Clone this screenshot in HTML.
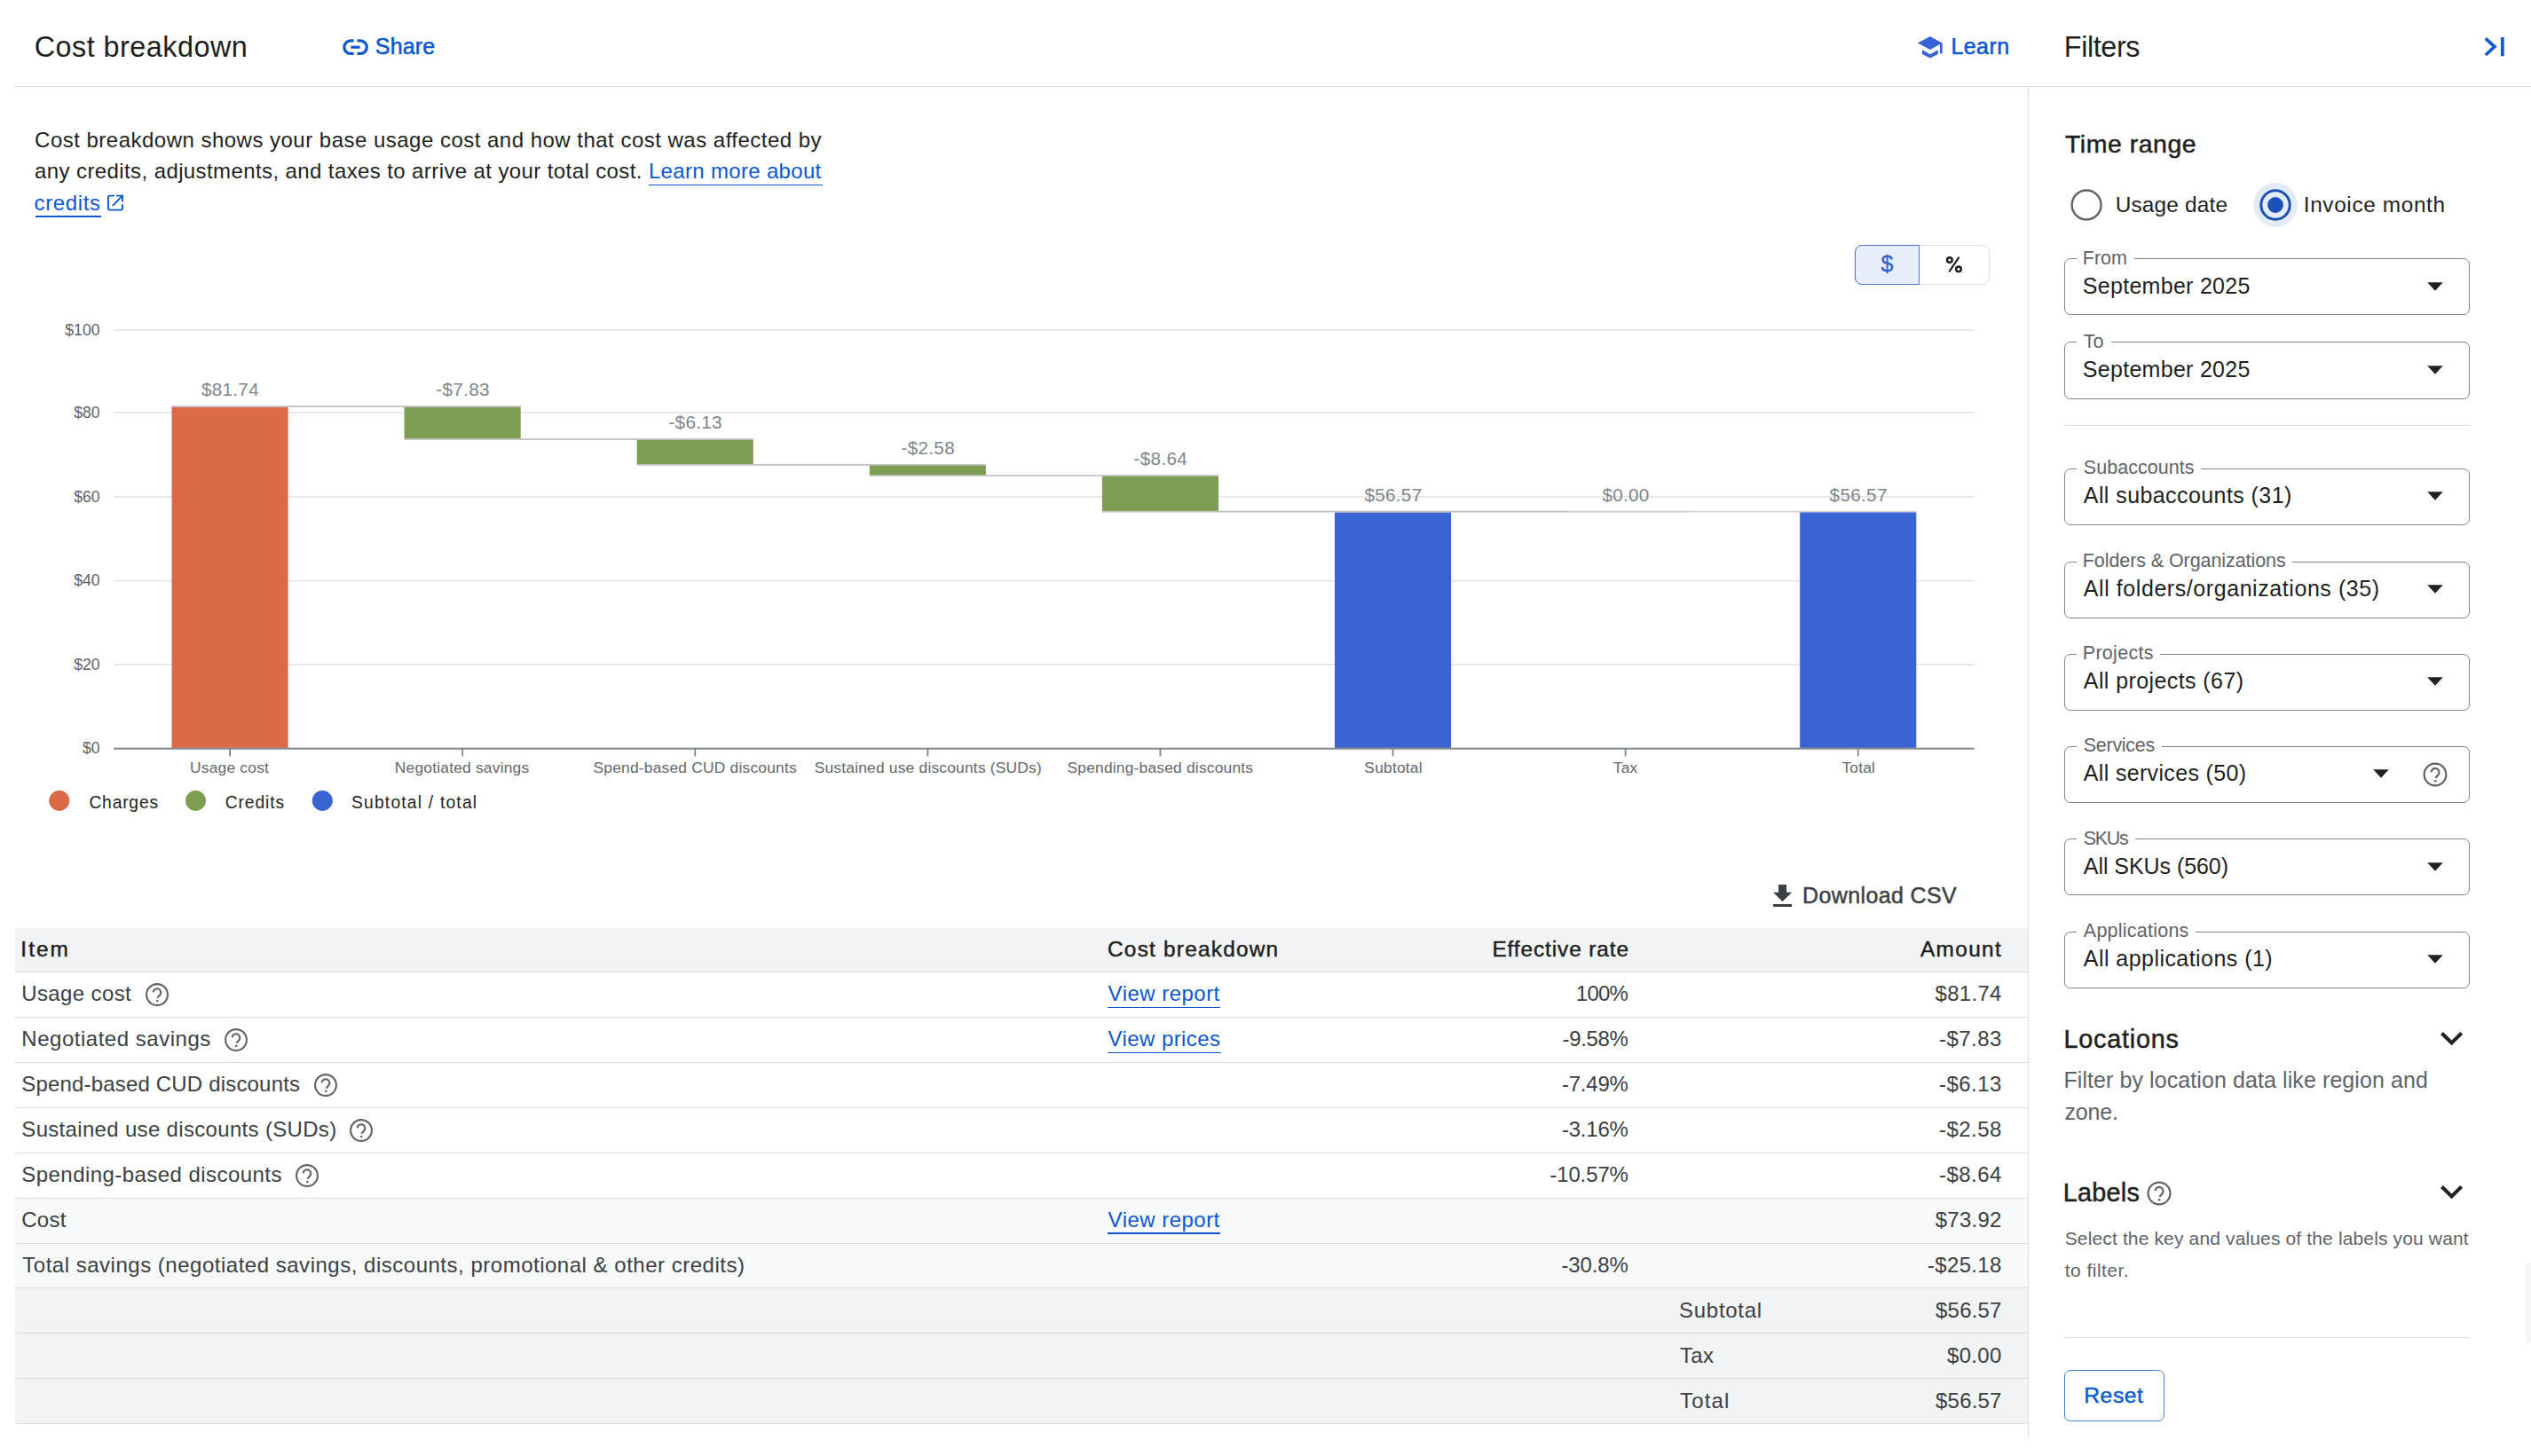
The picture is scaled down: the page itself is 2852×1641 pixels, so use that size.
<!DOCTYPE html>
<html lang="en"><head><meta charset="utf-8"><title>Cost breakdown</title>
<style>
html,body{margin:0;padding:0;background:#ffffff;}
body{width:2852px;height:1641px;position:relative;overflow:hidden;font-family:"Liberation Sans", sans-serif;}
.t{position:absolute;white-space:pre;line-height:0;font-family:"Liberation Sans", sans-serif;}
@media (max-width:1600px){html{zoom:0.5;}}
</style></head><body>
<div style="position:absolute;left:17.00px;top:96.60px;width:2835.00px;height:1.40px;background:#dadce0;"></div>
<div style="position:absolute;left:2284.60px;top:97.50px;width:1.20px;height:1520.00px;background:#dadce0;"></div>
<div style="position:absolute;left:2846.00px;top:1423.00px;width:6.00px;height:91.00px;background:#f6f6f6;"></div>
<svg style="position:absolute;left:0;top:0" width="2852" height="100" viewBox="0 0 2852 100">
<g fill="none" stroke="#0b57d0" stroke-width="3.2">
<path d="M398.6 45.9 H395.1 A7.25 7.25 0 0 0 395.1 60.4 H398.6"/>
<path d="M402.6 45.9 H406.1 A7.25 7.25 0 0 1 406.1 60.4 H402.6"/>
<path d="M395.4 53.2 H405.6"/>
</g>
<g fill="#3562d4">
<path d="M2174.9 41.1 L2160.9 48.6 L2174.9 56.0 L2188.5 48.6 Z"/>
<path d="M2166.0 56.3 L2166.0 61.0 L2174.9 65.6 L2183.8 61.0 L2183.8 56.3 L2174.9 61.2 Z"/>
<rect x="2186.0" y="48.6" width="2.6" height="11.8"/>
</g>
<g fill="none" stroke="#0b5cd6" stroke-width="3.6">
<path d="M2800.8 43.3 L2811.0 52.6 L2800.8 62.0"/>
</g>
<rect x="2818.0" y="42.0" width="3.7" height="21.3" fill="#0b5cd6"/>
</svg>
<div style="position:absolute;left:730.70px;top:207.60px;width:196.00px;height:1.40px;background:#0b57d0;"></div>
<div style="position:absolute;left:39.50px;top:243.20px;width:74.00px;height:1.40px;background:#0b57d0;"></div>
<svg style="position:absolute;left:110px;top:210px" width="40" height="35" viewBox="110 210 40 35"><g fill="none" stroke="#0b57d0" stroke-width="1.9" stroke-linecap="square">
<path d="M128.0 220.6 H124.0 Q121.9 220.6 121.9 222.7 V234.5 Q121.9 236.6 124.0 236.6 H135.9 Q138.0 236.6 138.0 234.5 V231.2"/>
<path d="M132.0 220.6 H138.0 V226.4"/>
<path d="M127.4 231.3 L137.4 221.2" stroke-linecap="round"/>
</g></svg>
<div style="position:absolute;left:2090.30px;top:276.10px;width:151.60px;height:44.60px;background:#fff;box-sizing:border-box;border:1.3px solid #dadce0;border-radius:8px;"></div>
<div style="position:absolute;left:2090.30px;top:276.10px;width:72.60px;height:44.60px;background:#e8eef9;box-sizing:border-box;border:1.5px solid #4d73d3;border-radius:8px 0 0 8px;"></div>
<svg style="position:absolute;left:2185px;top:284px" width="32" height="28" viewBox="2185 284 32 28"><g fill="none" stroke="#1f1f1f"><circle cx="2196.9" cy="293.0" r="2.85" stroke-width="2.5"/><circle cx="2207.0" cy="303.3" r="2.85" stroke-width="2.5"/><path d="M2207.6 289.6 L2196.3 306.3" stroke-width="2.1"/></g></svg>
<svg style="position:absolute;left:0;top:0" width="2852" height="960" viewBox="0 0 2852 960">
<rect x="128.0" y="748.30" width="2096.8" height="1.6" fill="#e1e3e6"/>
<rect x="128.0" y="653.80" width="2096.8" height="1.6" fill="#e1e3e6"/>
<rect x="128.0" y="559.10" width="2096.8" height="1.6" fill="#e1e3e6"/>
<rect x="128.0" y="464.20" width="2096.8" height="1.6" fill="#e1e3e6"/>
<rect x="128.0" y="371.40" width="2096.8" height="1.6" fill="#e1e3e6"/>
<rect x="193.50" y="458.15" width="131.1" height="384.75" fill="#db6a46"/>
<rect x="455.60" y="458.15" width="131.1" height="36.86" fill="#7c9d52"/>
<rect x="717.70" y="495.01" width="131.1" height="28.85" fill="#7c9d52"/>
<rect x="979.80" y="523.86" width="131.1" height="12.14" fill="#7c9d52"/>
<rect x="1241.90" y="536.00" width="131.1" height="40.67" fill="#7c9d52"/>
<rect x="1504.00" y="576.63" width="131.1" height="266.27" fill="#3a64d2"/>
<rect x="2028.20" y="576.63" width="131.1" height="266.27" fill="#3a64d2"/>
<rect x="193.50" y="457.25" width="393.20" height="1.8" fill="#c2c2c2"/>
<rect x="455.60" y="494.11" width="393.20" height="1.8" fill="#c2c2c2"/>
<rect x="717.70" y="522.96" width="393.20" height="1.8" fill="#c2c2c2"/>
<rect x="979.80" y="535.10" width="393.20" height="1.8" fill="#c2c2c2"/>
<rect x="1241.90" y="575.73" width="393.20" height="1.8" fill="#c2c2c2"/>
<rect x="1504.00" y="575.73" width="393.20" height="1.8" fill="#c2c2c2"/>
<rect x="1766.10" y="575.73" width="393.20" height="1.8" fill="#d4d4d4"/>
<rect x="128.0" y="842.70" width="2096.8" height="2.0" fill="#80868b"/>
<rect x="258.15" y="842.9" width="1.8" height="9.5" fill="#80868b"/>
<rect x="520.25" y="842.9" width="1.8" height="9.5" fill="#80868b"/>
<rect x="782.35" y="842.9" width="1.8" height="9.5" fill="#80868b"/>
<rect x="1044.45" y="842.9" width="1.8" height="9.5" fill="#80868b"/>
<rect x="1306.55" y="842.9" width="1.8" height="9.5" fill="#80868b"/>
<rect x="1568.65" y="842.9" width="1.8" height="9.5" fill="#80868b"/>
<rect x="1830.75" y="842.9" width="1.8" height="9.5" fill="#80868b"/>
<rect x="2092.85" y="842.9" width="1.8" height="9.5" fill="#80868b"/>
<circle cx="66.8" cy="902.4" r="11.1" fill="#db6a46" stroke="#d05a30" stroke-width="0.8"/>
<circle cx="220.5" cy="902.4" r="11.1" fill="#7c9d52" stroke="#6f9a3a" stroke-width="0.8"/>
<circle cx="363.3" cy="902.4" r="11.1" fill="#3a64d2" stroke="#2a55d0" stroke-width="0.8"/>
</svg>
<svg style="position:absolute;left:1997.7px;top:997.1px" width="21.2" height="24.9" viewBox="5 3 14 17" preserveAspectRatio="none"><path fill="#3c4043" d="M19 9h-4V3H9v6H5l7 7 7-7zM5 18v2h14v-2H5z"/></svg>
<div style="position:absolute;left:17.00px;top:1045.50px;width:2267.60px;height:50.00px;background:#f1f3f4;"></div>
<div style="position:absolute;left:17.00px;top:1095.50px;width:2267.60px;height:50.92px;background:#ffffff;"></div>
<div style="position:absolute;left:17.00px;top:1146.42px;width:2267.60px;height:50.92px;background:#ffffff;"></div>
<div style="position:absolute;left:17.00px;top:1197.34px;width:2267.60px;height:50.92px;background:#ffffff;"></div>
<div style="position:absolute;left:17.00px;top:1248.26px;width:2267.60px;height:50.92px;background:#ffffff;"></div>
<div style="position:absolute;left:17.00px;top:1299.18px;width:2267.60px;height:50.92px;background:#ffffff;"></div>
<div style="position:absolute;left:17.00px;top:1350.10px;width:2267.60px;height:50.92px;background:#f8f9fa;"></div>
<div style="position:absolute;left:17.00px;top:1401.02px;width:2267.60px;height:50.92px;background:#f8f9fa;"></div>
<div style="position:absolute;left:17.00px;top:1451.94px;width:2267.60px;height:50.92px;background:#f1f3f4;"></div>
<div style="position:absolute;left:17.00px;top:1502.86px;width:2267.60px;height:50.92px;background:#f1f3f4;"></div>
<div style="position:absolute;left:17.00px;top:1553.78px;width:2267.60px;height:50.92px;background:#f1f3f4;"></div>
<div style="position:absolute;left:17.00px;top:1095.00px;width:2267.60px;height:1.00px;background:#dadce0;"></div>
<div style="position:absolute;left:17.00px;top:1146.00px;width:2267.60px;height:1.00px;background:#dadce0;"></div>
<div style="position:absolute;left:17.00px;top:1197.00px;width:2267.60px;height:1.00px;background:#dadce0;"></div>
<div style="position:absolute;left:17.00px;top:1248.00px;width:2267.60px;height:1.00px;background:#dadce0;"></div>
<div style="position:absolute;left:17.00px;top:1299.00px;width:2267.60px;height:1.00px;background:#dadce0;"></div>
<div style="position:absolute;left:17.00px;top:1350.00px;width:2267.60px;height:1.00px;background:#dadce0;"></div>
<div style="position:absolute;left:17.00px;top:1401.00px;width:2267.60px;height:1.00px;background:#dadce0;"></div>
<div style="position:absolute;left:17.00px;top:1451.00px;width:2267.60px;height:1.00px;background:#dadce0;"></div>
<div style="position:absolute;left:17.00px;top:1502.00px;width:2267.60px;height:1.00px;background:#dadce0;"></div>
<div style="position:absolute;left:17.00px;top:1553.00px;width:2267.60px;height:1.00px;background:#dadce0;"></div>
<div style="position:absolute;left:17.00px;top:1604.00px;width:2267.60px;height:1.00px;background:#dadce0;"></div>
<div style="position:absolute;left:1248.30px;top:1134.70px;width:126.90px;height:1.40px;background:#0b57d0;z-index:2"></div>
<div style="position:absolute;left:1248.30px;top:1185.62px;width:127.30px;height:1.40px;background:#0b57d0;z-index:2"></div>
<div style="position:absolute;left:1248.30px;top:1389.30px;width:126.90px;height:1.40px;background:#0b57d0;z-index:2"></div>
<svg style="position:absolute;left:2300px;top:190px" width="320" height="80" viewBox="2300 190 320 80">
<circle cx="2351.1" cy="231" r="16.45" fill="none" stroke="#5f6368" stroke-width="2.4"/>
<circle cx="2564" cy="231" r="24.9" fill="#e4ebf8"/>
<circle cx="2564" cy="231" r="16.2" fill="none" stroke="#1b51b5" stroke-width="3.0"/>
<circle cx="2564" cy="231" r="8.9" fill="#1b51b5"/>
</svg>
<div style="position:absolute;left:2326.30px;top:291.30px;width:457.20px;height:64.20px;background:transparent;box-sizing:border-box;border:1.3px solid #80868b;border-radius:7px;"></div>
<div style="position:absolute;left:2340.00px;top:288.30px;width:64.60px;height:6.00px;background:#ffffff;"></div>
<svg style="position:absolute;left:2734.60px;top:317.60px" width="18" height="10" viewBox="0 0 18 10"><path d="M0.2 0.2 H17.8 L9 9.8 Z" fill="#202124"/></svg>
<div style="position:absolute;left:2326.30px;top:385.40px;width:457.20px;height:64.20px;background:transparent;box-sizing:border-box;border:1.3px solid #80868b;border-radius:7px;"></div>
<div style="position:absolute;left:2340.00px;top:382.40px;width:39.00px;height:6.00px;background:#ffffff;"></div>
<svg style="position:absolute;left:2734.60px;top:411.70px" width="18" height="10" viewBox="0 0 18 10"><path d="M0.2 0.2 H17.8 L9 9.8 Z" fill="#202124"/></svg>
<div style="position:absolute;left:2326.00px;top:478.60px;width:458.00px;height:1.30px;background:#dadce0;"></div>
<div style="position:absolute;left:2326.30px;top:527.50px;width:457.20px;height:64.20px;background:transparent;box-sizing:border-box;border:1.3px solid #80868b;border-radius:7px;"></div>
<div style="position:absolute;left:2340.00px;top:524.50px;width:140.20px;height:6.00px;background:#ffffff;"></div>
<svg style="position:absolute;left:2734.60px;top:553.80px" width="18" height="10" viewBox="0 0 18 10"><path d="M0.2 0.2 H17.8 L9 9.8 Z" fill="#202124"/></svg>
<div style="position:absolute;left:2326.30px;top:632.60px;width:457.20px;height:64.20px;background:transparent;box-sizing:border-box;border:1.3px solid #80868b;border-radius:7px;"></div>
<div style="position:absolute;left:2340.00px;top:629.60px;width:243.40px;height:6.00px;background:#ffffff;"></div>
<svg style="position:absolute;left:2734.60px;top:658.90px" width="18" height="10" viewBox="0 0 18 10"><path d="M0.2 0.2 H17.8 L9 9.8 Z" fill="#202124"/></svg>
<div style="position:absolute;left:2326.30px;top:736.70px;width:457.20px;height:64.20px;background:transparent;box-sizing:border-box;border:1.3px solid #80868b;border-radius:7px;"></div>
<div style="position:absolute;left:2340.00px;top:733.70px;width:94.20px;height:6.00px;background:#ffffff;"></div>
<svg style="position:absolute;left:2734.60px;top:763.00px" width="18" height="10" viewBox="0 0 18 10"><path d="M0.2 0.2 H17.8 L9 9.8 Z" fill="#202124"/></svg>
<div style="position:absolute;left:2326.30px;top:840.50px;width:457.20px;height:64.20px;background:transparent;box-sizing:border-box;border:1.3px solid #80868b;border-radius:7px;"></div>
<div style="position:absolute;left:2340.00px;top:837.50px;width:96.00px;height:6.00px;background:#ffffff;"></div>
<svg style="position:absolute;left:2673.80px;top:866.80px" width="18" height="10" viewBox="0 0 18 10"><path d="M0.2 0.2 H17.8 L9 9.8 Z" fill="#202124"/></svg>
<div style="position:absolute;left:2326.30px;top:945.30px;width:457.20px;height:64.20px;background:transparent;box-sizing:border-box;border:1.3px solid #80868b;border-radius:7px;"></div>
<div style="position:absolute;left:2340.00px;top:942.30px;width:66.40px;height:6.00px;background:#ffffff;"></div>
<svg style="position:absolute;left:2734.60px;top:971.60px" width="18" height="10" viewBox="0 0 18 10"><path d="M0.2 0.2 H17.8 L9 9.8 Z" fill="#202124"/></svg>
<div style="position:absolute;left:2326.30px;top:1049.90px;width:457.20px;height:64.20px;background:transparent;box-sizing:border-box;border:1.3px solid #80868b;border-radius:7px;"></div>
<div style="position:absolute;left:2340.00px;top:1046.90px;width:134.10px;height:6.00px;background:#ffffff;"></div>
<svg style="position:absolute;left:2734.60px;top:1076.20px" width="18" height="10" viewBox="0 0 18 10"><path d="M0.2 0.2 H17.8 L9 9.8 Z" fill="#202124"/></svg>
<svg style="position:absolute;left:2749.5px;top:1163.30px" width="25.2" height="15.3" viewBox="6 8.59 12 7.41" preserveAspectRatio="none"><path fill="#202124" d="M16.59 8.59 12 13.17 7.41 8.59 6 10l6 6 6-6z"/></svg>
<svg style="position:absolute;left:2749.5px;top:1336.30px" width="25.2" height="15.3" viewBox="6 8.59 12 7.41" preserveAspectRatio="none"><path fill="#202124" d="M16.59 8.59 12 13.17 7.41 8.59 6 10l6 6 6-6z"/></svg>
<div style="position:absolute;left:2326.00px;top:1506.50px;width:458.00px;height:1.30px;background:#dadce0;"></div>
<div style="position:absolute;left:2326.20px;top:1544.30px;width:112.70px;height:57.30px;background:transparent;box-sizing:border-box;border:1.3px solid #4a7fd6;border-radius:7px;"></div>
<div class="t" style="left:38.70px;top:53.10px;font-size:32.4px;letter-spacing:0.466px;color:#1f1f1f;">Cost breakdown</div>
<div class="t" style="left:422.80px;top:51.80px;font-size:25px;letter-spacing:0.173px;color:#0b57d0;-webkit-text-stroke:0.55px #0b57d0;">Share</div>
<div class="t" style="left:2198.40px;top:51.90px;font-size:25px;letter-spacing:0.441px;color:#0b57d0;-webkit-text-stroke:0.55px #0b57d0;">Learn</div>
<div class="t" style="left:2325.80px;top:53.10px;font-size:32.4px;letter-spacing:-0.413px;color:#1f1f1f;">Filters</div>
<div class="t" style="left:39.10px;top:157.60px;font-size:24px;letter-spacing:0.484px;color:#1f1f1f;">Cost breakdown shows your base usage cost and how that cost was affected by</div>
<div class="t" style="left:39.10px;top:193.10px;font-size:24px;letter-spacing:0.397px;color:#1f1f1f;">any credits, adjustments, and taxes to arrive at your total cost.</div>
<div class="t" style="left:730.90px;top:193.10px;font-size:24px;letter-spacing:0.327px;color:#0b57d0;">Learn more about</div>
<div class="t" style="left:38.50px;top:228.70px;font-size:24px;letter-spacing:0.635px;color:#0b57d0;">credits</div>
<div class="t" style="left:2119.50px;top:296.80px;font-size:25px;letter-spacing:0.000px;color:#2f5fcf;-webkit-text-stroke:0.35px #2f5fcf;">$</div>
<div class="t" style="left:92.96px;top:842.70px;font-size:17.7px;letter-spacing:0.000px;color:#5f6368;">$0</div>
<div class="t" style="left:83.13px;top:748.90px;font-size:17.7px;letter-spacing:0.000px;color:#5f6368;">$20</div>
<div class="t" style="left:83.13px;top:654.40px;font-size:17.7px;letter-spacing:0.000px;color:#5f6368;">$40</div>
<div class="t" style="left:83.13px;top:559.70px;font-size:17.7px;letter-spacing:0.000px;color:#5f6368;">$60</div>
<div class="t" style="left:83.13px;top:464.80px;font-size:17.7px;letter-spacing:0.000px;color:#5f6368;">$80</div>
<div class="t" style="left:73.29px;top:372.00px;font-size:17.7px;letter-spacing:0.000px;color:#5f6368;">$100</div>
<div class="t" style="left:214.07px;top:865.10px;font-size:17.4px;letter-spacing:0.200px;color:#64686c;">Usage cost</div>
<div class="t" style="left:444.84px;top:865.10px;font-size:17.4px;letter-spacing:0.200px;color:#64686c;">Negotiated savings</div>
<div class="t" style="left:668.56px;top:865.10px;font-size:17.4px;letter-spacing:0.200px;color:#64686c;">Spend-based CUD discounts</div>
<div class="t" style="left:917.67px;top:865.10px;font-size:17.4px;letter-spacing:0.200px;color:#64686c;">Sustained use discounts (SUDs)</div>
<div class="t" style="left:1202.51px;top:865.10px;font-size:17.4px;letter-spacing:0.200px;color:#64686c;">Spending-based discounts</div>
<div class="t" style="left:1537.37px;top:865.10px;font-size:17.4px;letter-spacing:0.200px;color:#64686c;">Subtotal</div>
<div class="t" style="left:1817.77px;top:865.10px;font-size:17.4px;letter-spacing:0.200px;color:#64686c;">Tax</div>
<div class="t" style="left:2075.42px;top:865.10px;font-size:17.4px;letter-spacing:0.200px;color:#64686c;">Total</div>
<div class="t" style="left:226.92px;top:439.35px;font-size:20.7px;letter-spacing:0.300px;color:#80868b;">$81.74</div>
<div class="t" style="left:491.32px;top:439.35px;font-size:20.7px;letter-spacing:0.300px;color:#80868b;">-$7.83</div>
<div class="t" style="left:753.42px;top:476.21px;font-size:20.7px;letter-spacing:0.300px;color:#80868b;">-$6.13</div>
<div class="t" style="left:1015.52px;top:505.06px;font-size:20.7px;letter-spacing:0.300px;color:#80868b;">-$2.58</div>
<div class="t" style="left:1277.62px;top:517.20px;font-size:20.7px;letter-spacing:0.300px;color:#80868b;">-$8.64</div>
<div class="t" style="left:1537.42px;top:557.83px;font-size:20.7px;letter-spacing:0.300px;color:#80868b;">$56.57</div>
<div class="t" style="left:1805.42px;top:557.83px;font-size:20.7px;letter-spacing:0.300px;color:#80868b;">$0.00</div>
<div class="t" style="left:2061.62px;top:557.83px;font-size:20.7px;letter-spacing:0.300px;color:#80868b;">$56.57</div>
<div class="t" style="left:100.40px;top:905.00px;font-size:19.3px;letter-spacing:0.794px;color:#1f1f1f;">Charges</div>
<div class="t" style="left:253.70px;top:905.00px;font-size:19.3px;letter-spacing:0.911px;color:#1f1f1f;">Credits</div>
<div class="t" style="left:396.00px;top:905.00px;font-size:19.3px;letter-spacing:1.188px;color:#1f1f1f;">Subtotal / total</div>
<div class="t" style="left:2031.10px;top:1008.60px;font-size:25px;letter-spacing:0.368px;color:#3c4043;-webkit-text-stroke:0.45px #3c4043;">Download CSV</div>
<div class="t" style="left:23.30px;top:1069.90px;font-size:24.4px;letter-spacing:2.061px;color:#1f1f1f;-webkit-text-stroke:0.45px #1f1f1f;">Item</div>
<div class="t" style="left:1248.00px;top:1069.90px;font-size:24.4px;letter-spacing:1.224px;color:#1f1f1f;-webkit-text-stroke:0.45px #1f1f1f;">Cost breakdown</div>
<div class="t" style="left:1681.40px;top:1069.90px;font-size:24.4px;letter-spacing:0.905px;color:#1f1f1f;-webkit-text-stroke:0.45px #1f1f1f;">Effective rate</div>
<div class="t" style="left:2164.00px;top:1069.90px;font-size:24.4px;letter-spacing:1.344px;color:#1f1f1f;-webkit-text-stroke:0.45px #1f1f1f;">Amount</div>
<div class="t" style="left:24.30px;top:1120.20px;font-size:24px;letter-spacing:0.368px;color:#3c4043;">Usage cost</div>
<div class="t" style="left:1248.60px;top:1120.20px;font-size:24px;letter-spacing:0.472px;color:#0b57d0;">View report</div>
<div class="t" style="left:1775.80px;top:1120.20px;font-size:24px;letter-spacing:-0.748px;color:#3c4043;">100%</div>
<div class="t" style="left:2180.60px;top:1120.20px;font-size:24px;letter-spacing:0.268px;color:#3c4043;">$81.74</div>
<div class="t" style="left:24.30px;top:1171.22px;font-size:24px;letter-spacing:0.522px;color:#3c4043;">Negotiated savings</div>
<div class="t" style="left:1248.60px;top:1171.22px;font-size:24px;letter-spacing:0.413px;color:#0b57d0;">View prices</div>
<div class="t" style="left:1760.60px;top:1171.22px;font-size:24px;letter-spacing:-0.341px;color:#3c4043;">-9.58%</div>
<div class="t" style="left:2185.00px;top:1171.22px;font-size:24px;letter-spacing:0.459px;color:#3c4043;">-$7.83</div>
<div class="t" style="left:24.30px;top:1222.24px;font-size:24px;letter-spacing:0.175px;color:#3c4043;">Spend-based CUD discounts</div>
<div class="t" style="left:1759.90px;top:1222.24px;font-size:24px;letter-spacing:-0.201px;color:#3c4043;">-7.49%</div>
<div class="t" style="left:2185.00px;top:1222.24px;font-size:24px;letter-spacing:0.459px;color:#3c4043;">-$6.13</div>
<div class="t" style="left:24.30px;top:1273.26px;font-size:24px;letter-spacing:0.324px;color:#3c4043;">Sustained use discounts (SUDs)</div>
<div class="t" style="left:1759.90px;top:1273.26px;font-size:24px;letter-spacing:-0.201px;color:#3c4043;">-3.16%</div>
<div class="t" style="left:2185.00px;top:1273.26px;font-size:24px;letter-spacing:0.459px;color:#3c4043;">-$2.58</div>
<div class="t" style="left:24.30px;top:1324.28px;font-size:24px;letter-spacing:0.445px;color:#3c4043;">Spending-based discounts</div>
<div class="t" style="left:1746.30px;top:1324.28px;font-size:24px;letter-spacing:-0.125px;color:#3c4043;">-10.57%</div>
<div class="t" style="left:2185.00px;top:1324.28px;font-size:24px;letter-spacing:0.459px;color:#3c4043;">-$8.64</div>
<div class="t" style="left:24.30px;top:1375.30px;font-size:24px;letter-spacing:0.240px;color:#3c4043;">Cost</div>
<div class="t" style="left:1248.60px;top:1375.30px;font-size:24px;letter-spacing:0.472px;color:#0b57d0;">View report</div>
<div class="t" style="left:2180.80px;top:1375.30px;font-size:24px;letter-spacing:0.228px;color:#3c4043;">$73.92</div>
<div class="t" style="left:25.30px;top:1426.32px;font-size:24px;letter-spacing:0.511px;color:#3c4043;">Total savings (negotiated savings, discounts, promotional &amp; other credits)</div>
<div class="t" style="left:1759.40px;top:1426.32px;font-size:24px;letter-spacing:-0.101px;color:#3c4043;">-30.8%</div>
<div class="t" style="left:2172.00px;top:1426.32px;font-size:24px;letter-spacing:0.325px;color:#3c4043;">-$25.18</div>
<div class="t" style="left:1892.10px;top:1477.34px;font-size:24px;letter-spacing:0.695px;color:#3c4043;">Subtotal</div>
<div class="t" style="left:2181.10px;top:1477.34px;font-size:24px;letter-spacing:0.168px;color:#3c4043;">$56.57</div>
<div class="t" style="left:1893.10px;top:1528.36px;font-size:24px;letter-spacing:0.276px;color:#3c4043;">Tax</div>
<div class="t" style="left:2194.00px;top:1528.36px;font-size:24px;letter-spacing:0.322px;color:#3c4043;">$0.00</div>
<div class="t" style="left:1893.10px;top:1579.38px;font-size:24px;letter-spacing:1.134px;color:#3c4043;">Total</div>
<div class="t" style="left:2181.10px;top:1579.38px;font-size:24px;letter-spacing:0.168px;color:#3c4043;">$56.57</div>
<div class="t" style="left:2327.00px;top:161.80px;font-size:28.5px;letter-spacing:0.507px;color:#1f1f1f;-webkit-text-stroke:0.5px #1f1f1f;">Time range</div>
<div class="t" style="left:2383.70px;top:230.60px;font-size:24.4px;letter-spacing:0.168px;color:#1f1f1f;">Usage date</div>
<div class="t" style="left:2595.80px;top:230.60px;font-size:24.4px;letter-spacing:0.618px;color:#1f1f1f;">Invoice month</div>
<div class="t" style="left:2346.80px;top:290.70px;font-size:21.5px;letter-spacing:0.017px;color:#5f6368;">From</div>
<div class="t" style="left:2346.80px;top:321.80px;font-size:25px;letter-spacing:0.289px;color:#1f1f1f;">September 2025</div>
<div class="t" style="left:2347.80px;top:384.80px;font-size:21.5px;letter-spacing:-0.050px;color:#5f6368;">To</div>
<div class="t" style="left:2346.80px;top:415.90px;font-size:25px;letter-spacing:0.289px;color:#1f1f1f;">September 2025</div>
<div class="t" style="left:2347.80px;top:526.90px;font-size:21.5px;letter-spacing:0.034px;color:#5f6368;">Subaccounts</div>
<div class="t" style="left:2347.80px;top:558.00px;font-size:25px;letter-spacing:0.422px;color:#1f1f1f;">All subaccounts (31)</div>
<div class="t" style="left:2346.80px;top:632.00px;font-size:21.5px;letter-spacing:-0.081px;color:#5f6368;">Folders &amp; Organizations</div>
<div class="t" style="left:2347.80px;top:663.10px;font-size:25px;letter-spacing:0.569px;color:#1f1f1f;">All folders/organizations (35)</div>
<div class="t" style="left:2346.80px;top:736.10px;font-size:21.5px;letter-spacing:0.284px;color:#5f6368;">Projects</div>
<div class="t" style="left:2347.80px;top:767.20px;font-size:25px;letter-spacing:0.410px;color:#1f1f1f;">All projects (67)</div>
<div class="t" style="left:2347.80px;top:839.90px;font-size:21.5px;letter-spacing:-0.284px;color:#5f6368;">Services</div>
<div class="t" style="left:2347.80px;top:871.00px;font-size:25px;letter-spacing:0.338px;color:#1f1f1f;">All services (50)</div>
<div class="t" style="left:2347.80px;top:944.70px;font-size:21.5px;letter-spacing:-1.369px;color:#5f6368;">SKUs</div>
<div class="t" style="left:2347.80px;top:975.80px;font-size:25px;letter-spacing:-0.055px;color:#1f1f1f;">All SKUs (560)</div>
<div class="t" style="left:2347.80px;top:1049.30px;font-size:21.5px;letter-spacing:0.238px;color:#5f6368;">Applications</div>
<div class="t" style="left:2347.80px;top:1080.40px;font-size:25px;letter-spacing:0.451px;color:#1f1f1f;">All applications (1)</div>
<div class="t" style="left:2325.40px;top:1170.90px;font-size:28.8px;letter-spacing:0.791px;color:#1f1f1f;-webkit-text-stroke:0.5px #1f1f1f;">Locations</div>
<div class="t" style="left:2325.40px;top:1216.80px;font-size:25px;letter-spacing:0.088px;color:#5f6368;">Filter by location data like region and</div>
<div class="t" style="left:2326.40px;top:1252.70px;font-size:25px;letter-spacing:-0.153px;color:#5f6368;">zone.</div>
<div class="t" style="left:2324.70px;top:1343.90px;font-size:28.8px;letter-spacing:0.268px;color:#1f1f1f;-webkit-text-stroke:0.5px #1f1f1f;">Labels</div>
<div class="t" style="left:2326.70px;top:1396.00px;font-size:21.0px;letter-spacing:0.142px;color:#5f6368;">Select the key and values of the labels you want</div>
<div class="t" style="left:2326.70px;top:1431.80px;font-size:21.0px;letter-spacing:0.471px;color:#5f6368;">to filter.</div>
<div class="t" style="left:2348.20px;top:1572.80px;font-size:24.7px;letter-spacing:0.567px;color:#0b5bd6;-webkit-text-stroke:0.5px #0b5bd6;">Reset</div>
<svg style="position:absolute;left:160.50px;top:1104.96px" width="32" height="32" viewBox="-16 -16 32 32"><g transform="scale(1.0000)" fill="none" stroke="#5f6368">
<circle cx="0" cy="0" r="11.900" stroke-width="2.1"/>
<path d="M-4.3 -2.6 A4.3 4.3 0 1 1 3.3 0.3 L0.3 3.6" stroke-width="2.1"/>
</g><circle cx="0.20" cy="7.00" r="1.30" fill="#5f6368"/></svg>
<svg style="position:absolute;left:249.80px;top:1155.88px" width="32" height="32" viewBox="-16 -16 32 32"><g transform="scale(1.0000)" fill="none" stroke="#5f6368">
<circle cx="0" cy="0" r="11.900" stroke-width="2.1"/>
<path d="M-4.3 -2.6 A4.3 4.3 0 1 1 3.3 0.3 L0.3 3.6" stroke-width="2.1"/>
</g><circle cx="0.20" cy="7.00" r="1.30" fill="#5f6368"/></svg>
<svg style="position:absolute;left:350.60px;top:1206.80px" width="32" height="32" viewBox="-16 -16 32 32"><g transform="scale(1.0000)" fill="none" stroke="#5f6368">
<circle cx="0" cy="0" r="11.900" stroke-width="2.1"/>
<path d="M-4.3 -2.6 A4.3 4.3 0 1 1 3.3 0.3 L0.3 3.6" stroke-width="2.1"/>
</g><circle cx="0.20" cy="7.00" r="1.30" fill="#5f6368"/></svg>
<svg style="position:absolute;left:390.90px;top:1257.72px" width="32" height="32" viewBox="-16 -16 32 32"><g transform="scale(1.0000)" fill="none" stroke="#5f6368">
<circle cx="0" cy="0" r="11.900" stroke-width="2.1"/>
<path d="M-4.3 -2.6 A4.3 4.3 0 1 1 3.3 0.3 L0.3 3.6" stroke-width="2.1"/>
</g><circle cx="0.20" cy="7.00" r="1.30" fill="#5f6368"/></svg>
<svg style="position:absolute;left:330.10px;top:1308.64px" width="32" height="32" viewBox="-16 -16 32 32"><g transform="scale(1.0000)" fill="none" stroke="#5f6368">
<circle cx="0" cy="0" r="11.900" stroke-width="2.1"/>
<path d="M-4.3 -2.6 A4.3 4.3 0 1 1 3.3 0.3 L0.3 3.6" stroke-width="2.1"/>
</g><circle cx="0.20" cy="7.00" r="1.30" fill="#5f6368"/></svg>
<svg style="position:absolute;left:2728.20px;top:856.50px" width="32" height="32" viewBox="-16 -16 32 32"><g transform="scale(1.0388)" fill="none" stroke="#5f6368">
<circle cx="0" cy="0" r="11.900" stroke-width="2.1"/>
<path d="M-4.3 -2.6 A4.3 4.3 0 1 1 3.3 0.3 L0.3 3.6" stroke-width="2.1"/>
</g><circle cx="0.21" cy="7.27" r="1.35" fill="#5f6368"/></svg>
<svg style="position:absolute;left:2417.20px;top:1328.90px" width="32" height="32" viewBox="-16 -16 32 32"><g transform="scale(1.0465)" fill="none" stroke="#5f6368">
<circle cx="0" cy="0" r="11.900" stroke-width="2.1"/>
<path d="M-4.3 -2.6 A4.3 4.3 0 1 1 3.3 0.3 L0.3 3.6" stroke-width="2.1"/>
</g><circle cx="0.21" cy="7.33" r="1.36" fill="#5f6368"/></svg>
</body></html>
